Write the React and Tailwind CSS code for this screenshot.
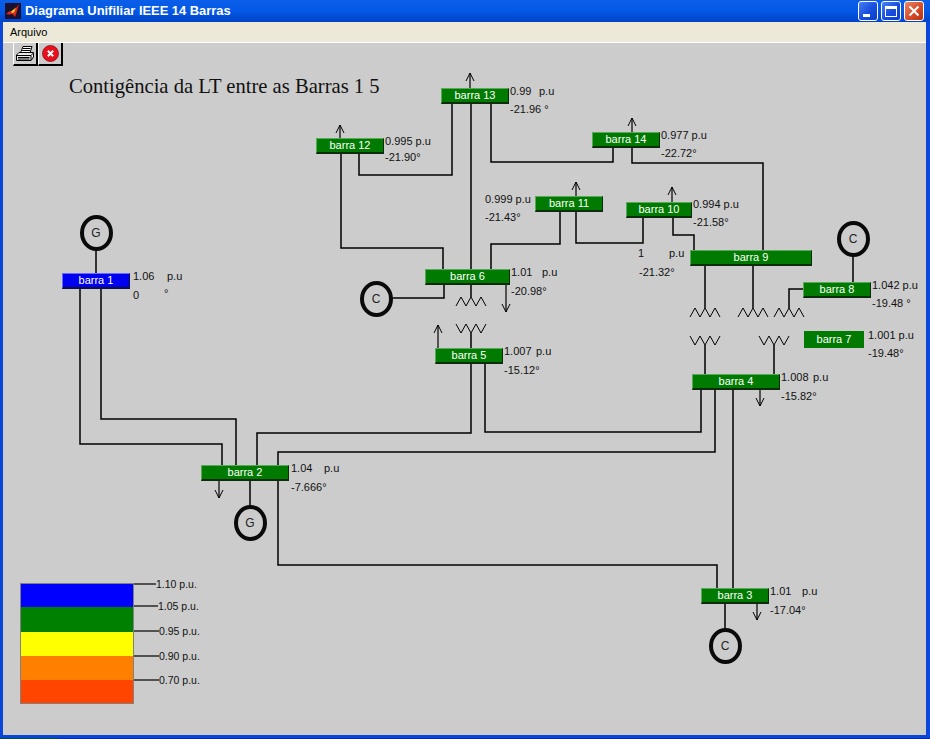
const ORIGIN_X = 3;
const ORIGIN_Y = 43;

const buses = [
  { name: 'barra 1', x: 62, y: 273, w: 68, h: 16, color: 'blue' },
  { name: 'barra 2', x: 201, y: 465, w: 88, h: 16 },
  { name: 'barra 3', x: 701, y: 588, w: 68, h: 16 },
  { name: 'barra 4', x: 692, y: 374, w: 88, h: 16 },
  { name: 'barra 5', x: 435, y: 348, w: 68, h: 16 },
  { name: 'barra 6', x: 425, y: 269, w: 85, h: 16 },
  { name: 'barra 7', x: 804, y: 331, w: 60, h: 17, flat: true },
  { name: 'barra 8', x: 803, y: 282, w: 68, h: 16 },
  { name: 'barra 9', x: 690, y: 250, w: 122, h: 16 },
  { name: 'barra 10', x: 626, y: 202, w: 66, h: 16 },
  { name: 'barra 11', x: 535, y: 196, w: 68, h: 16 },
  { name: 'barra 12', x: 316, y: 138, w: 68, h: 16 },
  { name: 'barra 13', x: 441, y: 88, w: 68, h: 16 },
  { name: 'barra 14', x: 592, y: 132, w: 68, h: 16 },
];

const machines = [
  { label: 'G', x: 96, y: 233 },
  { label: 'G', x: 250, y: 523 },
  { label: 'C', x: 376, y: 299 },
  { label: 'C', x: 853, y: 239 },
  { label: 'C', x: 725, y: 646 },
];

const readings = [
  ['1.06', 133, 276], ['p.u', 167, 276], ['0', 133, 295], ['°', 164, 293],
  ['1.04', 291, 468], ['p.u', 324, 468], ['-7.666°', 291, 487],
  ['1.01', 770, 591], ['p.u', 802, 591], ['-17.04°', 770, 610],
  ['1.008', 781, 377], ['p.u', 813, 377], ['-15.82°', 781, 396],
  ['1.007', 504, 351], ['p.u', 536, 351], ['-15.12°', 504, 370],
  ['1.01', 511, 272], ['p.u', 542, 272], ['-20.98°', 511, 291],
  ['1.001 p.u', 868, 335], ['-19.48°', 868, 353],
  ['1.042 p.u', 872, 285], ['-19.48 °', 872, 303],
  ['1', 638, 253], ['p.u', 669, 253], ['-21.32°', 639, 272],
  ['0.994 p.u', 693, 204], ['-21.58°', 693, 222],
  ['0.999 p.u', 485, 199], ['-21.43°', 485, 217],
  ['0.995 p.u', 385, 141], ['-21.90°', 385, 157],
  ['0.99', 510, 91], ['p.u', 539, 91], ['-21.96 °', 510, 109],
  ['0.977 p.u', 661, 135], ['-22.72°', 661, 153],
];

// lines between the bars
const wires = [
  'M96 250V273',
  'M80 289V444H222V465',
  'M101 289V419H236V465',
  'M257 465V433H471V363',
  'M278 465V452H715V389',
  'M278 481V565H717V588',
  'M250 481V506',
  'M733 588V389',
  'M725 603V628',
  'M701 389V432H485V363',
  'M705 375V345',
  'M774 375V345',
  'M705 265V308',
  'M753 265V308',
  'M789 308V289H803',
  'M471 284V297',
  'M471 333V348',
  'M391 298H444V284',
  'M471 269V103',
  'M443 269V248H341V153',
  'M491 269V244H560V212',
  'M576 212V243H643V217',
  'M673 217V235H694V250',
  'M359 153V175H452V103',
  'M491 103V162H613V147',
  'M632 147V163H763V250',
  'M853 256V282',
];

const arrows = [
  { x: 470, from: 89, to: 73 },
  { x: 340, from: 139, to: 125 },
  { x: 632, from: 132, to: 118 },
  { x: 576, from: 196, to: 182 },
  { x: 672, from: 202, to: 187 },
  { x: 438, from: 348, to: 325 },
  { x: 506, from: 284, to: 312 },
  { x: 219, from: 481, to: 498 },
  { x: 757, from: 603, to: 620 },
  { x: 760, from: 389, to: 406 },
];

// transformer windings, center x and top y
const peaks = [[705, 308], [753, 308], [789, 308], [471, 297]];
const valleys = [[705, 336], [774, 336], [471, 324]];

const legend = [
  { color: 'bg-[#0000ff]', h: 'h-[23px]' },
  { color: 'bg-[#008000]', h: 'h-[25px]' },
  { color: 'bg-[#ffff00]', h: 'h-[24px]' },
  { color: 'bg-[#ff8000]', h: 'h-[24px]' },
  { color: 'bg-[#ff4500]', h: 'h-[23px]' },
];

const legendLabels = [
  ['1.10 p.u.', 156, 584, 132],
  ['1.05 p.u.', 158, 606, 133],
  ['0.95 p.u.', 159, 631, 133],
  ['0.90 p.u.', 159, 656, 133],
  ['0.70 p.u.', 159, 680, 132],
];

const SANS = { fontFamily: '"Liberation Sans", Arial, sans-serif' };

function Label({ x, y, small, children }) {
  return (
    <div
      className={`absolute h-[14px] whitespace-pre leading-[14px] text-[#111] ${small ? 'text-[10.5px]' : 'text-[11px]'}`}
      style={{ left: x - ORIGIN_X, top: y - ORIGIN_Y - 7 }}
    >
      {children}
    </div>
  );
}

function Bus({ bus }) {
  const fill = bus.color === 'blue' ? 'bg-[#0000f0]' : 'bg-[#007a00]';
  const edge = bus.flat
    ? ''
    : bus.color === 'blue'
      ? 'border-t border-l border-t-[#6a6aff] border-l-[#6a6aff] border-b-2 border-r border-b-[#101040] border-r-[#101040]'
      : 'border-t border-l border-t-[#5aa85a] border-l-[#5aa85a] border-b-2 border-r border-b-[#0c2c0c] border-r-[#0c2c0c]';
  return (
    <div
      className={`absolute flex items-center justify-center text-[11px] leading-none text-white ${fill} ${edge}`}
      style={{ left: bus.x - ORIGIN_X, top: bus.y - ORIGIN_Y, width: bus.w, height: bus.h }}
    >
      {bus.name}
    </div>
  );
}

function Machine({ m }) {
  return (
    <div
      className="absolute flex h-[36px] w-[33px] items-center justify-center rounded-[50%] border-[4px] border-[#0a0a0a] text-[12px] text-[#222]"
      style={{ left: m.x - 16.5 - ORIGIN_X, top: m.y - 18 - ORIGIN_Y }}
    >
      {m.label}
    </div>
  );
}

function Diagram() {
  return (
    <svg
      className="absolute left-0 top-0"
      width="923"
      height="691"
      viewBox={`${ORIGIN_X} ${ORIGIN_Y} 923 691`}
      fill="none"
      stroke="#000"
      strokeWidth="1.5"
    >
      {wires.map((d) => <path key={d} d={d} />)}
      {arrows.map((a) => {
        const dir = a.to > a.from ? -1 : 1;
        return (
          <g key={a.x + '-' + a.from}>
            <path d={`M${a.x} ${a.from}V${a.to}`} strokeWidth="1.2" />
            <path d={`M${a.x - 4} ${a.to + dir * 8}L${a.x} ${a.to}L${a.x + 4} ${a.to + dir * 8}`} strokeWidth="1" />
          </g>
        );
      })}
      {peaks.map(([x, y]) => (
        <path key={`p${x}`} strokeWidth="1" d={`M${x - 15} ${y + 9}L${x - 10} ${y}L${x - 5} ${y + 9}L${x} ${y}L${x + 5} ${y + 9}L${x + 10} ${y}L${x + 15} ${y + 9}`} />
      ))}
      {valleys.map(([x, y]) => (
        <path key={`v${x}`} strokeWidth="1" d={`M${x - 15} ${y}L${x - 10} ${y + 9}L${x - 5} ${y}L${x} ${y + 9}L${x + 5} ${y}L${x + 10} ${y + 9}L${x + 15} ${y}`} />
      ))}
      {legendLabels.map(([t, lx, y, x0]) => <path key={t} d={`M${x0} ${y}H${lx}`} strokeWidth="1.2" />)}
    </svg>
  );
}

function PrinterIcon() {
  return (
    <svg width="18" height="16" viewBox="0 0 18 16" fill="none" stroke="#000">
      <path d="M4.5 7L7 0.5H16L14 7" fill="#fff" />
      <path d="M7 2.5H14.5M6.2 4.5H14" strokeWidth="1" />
      <path d="M0.5 9L3 6.5H17.5V11L15 14.5H0.5Z" fill="#e8e8e8" />
      <path d="M0.5 9.5H15V14.5M15 9.5L17.5 7" />
      <path d="M2 11.5H13.5M2 13H13.5" strokeWidth="1" />
    </svg>
  );
}

function CloseIcon() {
  return (
    <svg width="17" height="17" viewBox="0 0 17 17">
      <circle cx="8.5" cy="8.5" r="8" fill="#e8101c" stroke="#901018" strokeWidth="0.8" />
      <path d="M5.8 5.8L11.2 11.2M11.2 5.8L5.8 11.2" stroke="#fff" strokeWidth="2" />
    </svg>
  );
}

function MatlabIcon() {
  return (
    <svg width="16" height="16" viewBox="0 0 16 16" className="shrink-0">
      <rect width="16" height="16" fill="#1a1030" />
      <path d="M1 11L5 8L8 9L14 1L12 8L10 14L7.5 11L4 11.5Z" fill="#e02818" />
      <path d="M6 8.5L11 4.5L9 9.5L7 10Z" fill="#f8c828" />
    </svg>
  );
}

function WinButton({ red, children }) {
  const skin = red
    ? 'bg-gradient-to-br from-[#e8876a] via-[#d8502c] to-[#b83010]'
    : 'bg-gradient-to-br from-[#4a80f0] via-[#1a50e0] to-[#0a3cc8]';
  return (
    <div className={`flex h-[20px] w-[20px] items-center justify-center rounded-[3px] border border-white ${skin}`}>
      {children}
    </div>
  );
}

function ToolButton({ children }) {
  return (
    <div className="flex h-[23px] w-[25px] items-center justify-center border-b-2 border-r-2 border-b-black border-r-black border-l border-l-white bg-[#cccccc]">
      {children}
    </div>
  );
}

export default function App() {
  return (
    <div className="flex h-[739px] w-[930px] flex-col overflow-hidden bg-[#0a46d8]" style={SANS}>
      {/* title bar */}
      <div className="flex h-[22px] shrink-0 items-center bg-gradient-to-b from-[#0a5ee8] via-[#0358e6] to-[#0244c8] pl-[5px] pr-[6px]">
        <MatlabIcon />
        <span className="ml-[4px] flex-1 text-[12.9px] font-bold leading-none text-white">
          Diagrama Unifiliar IEEE 14 Barras
        </span>
        <div className="flex gap-[3px]">
          <WinButton>
            <span className="mt-[9px] mr-[4px] h-[3px] w-[7px] bg-white" />
          </WinButton>
          <WinButton>
            <span className="h-[11px] w-[12px] border border-t-[3px] border-white" />
          </WinButton>
          <WinButton red>
            <svg width="12" height="12" viewBox="0 0 12 12">
              <path d="M1.5 1.5L10.5 10.5M10.5 1.5L1.5 10.5" stroke="#fff" strokeWidth="2" />
            </svg>
          </WinButton>
        </div>
      </div>

      {/* window body */}
      <div className="flex min-h-0 flex-1 flex-col pb-[3px] pl-[3px] pr-[4px]">
        <div className="flex h-[21px] shrink-0 items-center border-b border-b-white bg-[#ece9d8] pl-[7px] text-[11px] text-black">
          Arquivo
        </div>
        <div className="relative min-h-0 flex-1 bg-[#cccccc] pl-[10px]">
          <Diagram />
          <div className="relative flex">
            <ToolButton><PrinterIcon /></ToolButton>
            <ToolButton><CloseIcon /></ToolButton>
          </div>

          <div
            className="absolute left-[66px] top-[31px] whitespace-pre text-[20.6px] leading-[24px] text-[#111]"
            style={{ fontFamily: '"Liberation Serif", "Times New Roman", serif' }}
          >
            Contigência da LT entre as Barras 1 5
          </div>

          {buses.map((b) => <Bus key={b.name} bus={b} />)}
          {machines.map((m) => <Machine key={`${m.label}${m.x}`} m={m} />)}
          {readings.map(([t, x, y]) => <Label key={`${t}${x}${y}`} x={x} y={y}>{t}</Label>)}

          {/* voltage legend */}
          <div className="absolute left-[17px] top-[540px] flex w-[114px] flex-col border border-[#808080]">
            {legend.map((l) => <div key={l.color} className={`${l.color} ${l.h}`} />)}
          </div>
          {legendLabels.map(([t, x, y]) => <Label key={t} x={x} y={y} small>{t}</Label>)}
        </div>
      </div>

      {/* edge of the taskbar below the window */}
      <div className="flex h-[1px] shrink-0 bg-[#0a2a90]">
        <div className="w-[58px] bg-[#0c4a40]" />
      </div>
    </div>
  );
}
